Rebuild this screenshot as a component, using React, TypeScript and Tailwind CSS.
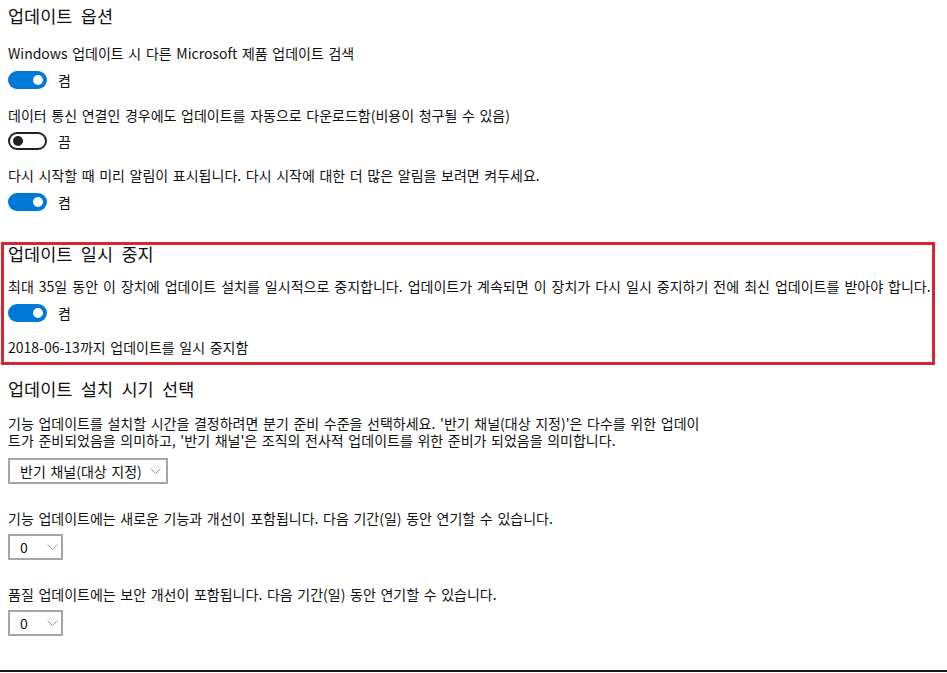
const font = { fontFamily: '"Noto Sans CJK KR", "Noto Sans", sans-serif' };

const body = "text-[14px] [word-spacing:1.5px] text-[#111]";
const title = "text-[17.5px] [word-spacing:4.5px] font-normal text-[#111] whitespace-nowrap";

function Toggle({ on }: { on: boolean }) {
  return (
    <div className="flex items-center h-[18px]">
      {on ? (
        <div className="w-[39px] h-[18px] rounded-full bg-[#0078d7] flex items-center justify-end pr-[4px]">
          <div className="w-[10px] h-[10px] rounded-full bg-white" />
        </div>
      ) : (
        <div className="w-[39px] h-[18px] rounded-full border-2 border-[#222] flex items-center pl-[3px]">
          <div className="w-[10px] h-[10px] rounded-full bg-[#222]" />
        </div>
      )}
      <span className={`ml-[11px] leading-[18px] ${body}`}>{on ? "켬" : "끔"}</span>
    </div>
  );
}

function Chevron() {
  return (
    <svg width="11" height="6" viewBox="0 0 11 6" className="shrink-0">
      <path d="M0.5 0.5 L5.5 5.5 L10.5 0.5" fill="none" stroke="#9a9a9a" strokeWidth="1" />
    </svg>
  );
}

function Select({ value, width, mt, gap }: { value: string; width: string; mt: string; gap: string }) {
  return (
    <div className={`${mt} ${width} h-[26px] border-2 border-[#a6a6a6] flex items-center pl-[10px] ${body}`}>
      <span className="whitespace-nowrap">{value}</span>
      <span className={gap}>
        <Chevron />
      </span>
    </div>
  );
}

export default function App() {
  return (
    <div className="w-[947px] h-[673px] bg-white overflow-hidden relative" style={font}>
      <div className="px-[8px]">
        <h1 className={`h-[32px] leading-[32px] ${title}`}>업데이트 옵션</h1>
        <p className={`mt-[12px] h-[18px] leading-[18px] whitespace-nowrap ${body}`}>
          Windows 업데이트 시 다른 Microsoft 제품 업데이트 검색
        </p>
        <div className="mt-[9px]">
          <Toggle on />
        </div>
        <p className={`mt-[17px] h-[18px] leading-[18px] whitespace-nowrap ${body}`}>
          데이터 통신 연결인 경우에도 업데이트를 자동으로 다운로드함(비용이 청구될 수 있음)
        </p>
        <div className="mt-[8px]">
          <Toggle on={false} />
        </div>
        <p className={`mt-[16px] h-[18px] leading-[18px] whitespace-nowrap ${body}`}>
          다시 시작할 때 미리 알림이 표시됩니다. 다시 시작에 대한 더 많은 알림을 보려면 켜두세요.
        </p>
        <div className="mt-[9px]">
          <Toggle on />
        </div>
      </div>

      {/* 일시 중지 (highlighted) */}
      <div className="mt-[31px] ml-[1px] w-[934px] border-[3px] border-[#d9252f] pl-[4px] pb-[6px]">
        <h2 className={`h-[18px] leading-[18px] ${title}`}>업데이트 일시 중지</h2>
        <p className={`mt-[14px] h-[18px] leading-[18px] whitespace-nowrap [word-spacing:1.9px] ${body}`}>
          최대 35일 동안 이 장치에 업데이트 설치를 일시적으로 중지합니다. 업데이트가 계속되면 이 장치가 다시 일시 중지하기 전에 최신 업데이트를 받아야 합니다.
        </p>
        <div className="mt-[9px]">
          <Toggle on />
        </div>
        <p className={`mt-[16px] h-[18px] leading-[18px] ${body}`}>2018-06-13까지 업데이트를 일시 중지함</p>
      </div>

      <div className="px-[8px]">
        <h2 className={`mt-[10px] h-[28px] leading-[28px] ${title}`}>업데이트 설치 시기 선택</h2>
        <p className={`mt-[12px] leading-[17px] whitespace-nowrap ${body}`}>
          기능 업데이트를 설치할 시간을 결정하려면 분기 준비 수준을 선택하세요. '반기 채널(대상 지정)'은 다수를 위한 업데이
          <br />
          트가 준비되었음을 의미하고, '반기 채널'은 조직의 전사적 업데이트를 위한 준비가 되었음을 의미합니다.
        </p>
        <Select value="반기 채널(대상 지정)" width="w-[160px]" mt="mt-[9px]" gap="ml-[8px]" />
        <p className={`mt-[25px] h-[18px] leading-[18px] whitespace-nowrap ${body}`}>
          기능 업데이트에는 새로운 기능과 개선이 포함됩니다. 다음 기간(일) 동안 연기할 수 있습니다.
        </p>
        <Select value="0" width="w-[55px]" mt="mt-[7px]" gap="ml-[19px]" />
        <p className={`mt-[25px] h-[18px] leading-[18px] whitespace-nowrap ${body}`}>
          품질 업데이트에는 보안 개선이 포함됩니다. 다음 기간(일) 동안 연기할 수 있습니다.
        </p>
        <Select value="0" width="w-[55px]" mt="mt-[7px]" gap="ml-[19px]" />
      </div>

      <div className="absolute left-0 right-0 top-[670px] h-[2px] bg-[#1a1a1a]" />
    </div>
  );
}
